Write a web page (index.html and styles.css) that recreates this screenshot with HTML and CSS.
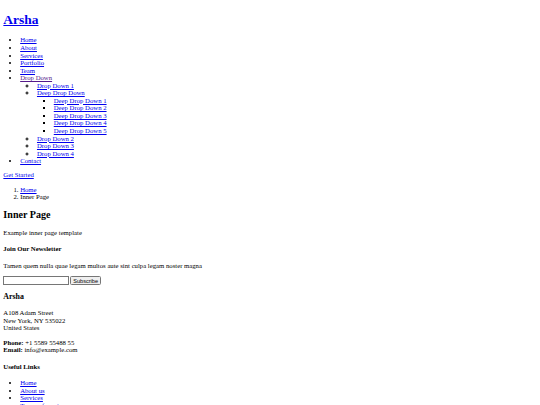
FILE: index.html
```html
<!DOCTYPE html>
<html>
<head>
<meta charset="utf-8">
<title>Inner Page - Arsha</title>
<link rel="stylesheet" href="styles.css">
</head>
<body class="page">
<header>
  <h1 class="logo"><a href="#">Arsha</a></h1>
  <nav>
    <ul>
      <li><a href="#">Home</a></li>
      <li><a href="#">About</a></li>
      <li><a href="#">Services</a></li>
      <li><a href="#">Portfolio</a></li>
      <li><a href="#">Team</a></li>
      <li><a href="#" class="visited">Drop Down</a>
        <ul>
          <li><a href="#">Drop Down 1</a></li>
          <li><a href="#">Deep Drop Down</a>
            <ul>
              <li><a href="#">Deep Drop Down 1</a></li>
              <li><a href="#">Deep Drop Down 2</a></li>
              <li><a href="#">Deep Drop Down 3</a></li>
              <li><a href="#">Deep Drop Down 4</a></li>
              <li><a href="#">Deep Drop Down 5</a></li>
            </ul>
          </li>
          <li><a href="#">Drop Down 2</a></li>
          <li><a href="#">Drop Down 3</a></li>
          <li><a href="#">Drop Down 4</a></li>
        </ul>
      </li>
      <li><a href="#">Contact</a></li>
    </ul>
  </nav>
  <p><a href="#">Get Started</a></p>
</header>
<main>
  <section>
    <ol>
      <li><a href="#">Home</a></li>
      <li>Inner Page</li>
    </ol>
    <h2>Inner Page</h2>
  </section>
  <section>
    <p>Example inner page template</p>
  </section>
</main>
<footer>
  <h4>Join Our Newsletter</h4>
  <p>Tamen quem nulla quae legam multos aute sint culpa legam noster magna</p>
  <form class="subscribe"><input class="field" type="email" name="email"><input class="btn" type="submit" value="Subscribe"></form>
  <h3>Arsha</h3>
  <p>A108 Adam Street<br>New York, NY 535022<br>United States</p>
  <p><strong>Phone:</strong> +1 5589 55488 55<br><strong>Email:</strong> info@example.com</p>
  <h4>Useful Links</h4>
  <ul>
    <li><a href="#">Home</a></li>
    <li><a href="#">About us</a></li>
    <li><a href="#">Services</a></li>
    <li><a href="#">Terms of service</a></li>
    <li><a href="#">Privacy policy</a></li>
  </ul>
</footer>
</body>
</html>
```
FILE: styles.css
```css
html {
  background: #fff;
}
.page {
  zoom: 0.42;
  font-family: "Liberation Serif", "Times New Roman", serif;
  line-height: 1.125;
  color: #000;
}
.visited {
  color: #551a8b;
}
.field,
.btn {
  font-family: "Liberation Sans", Arial, sans-serif;
  font-size: 13.33px;
  box-sizing: border-box;
  height: 20px;
  vertical-align: middle;
}
.field {
  width: 156px;
  padding: 1px 2px;
}
.btn {
  width: 74px;
  padding: 1px 6px;
  margin-left: 2px;
}
```
